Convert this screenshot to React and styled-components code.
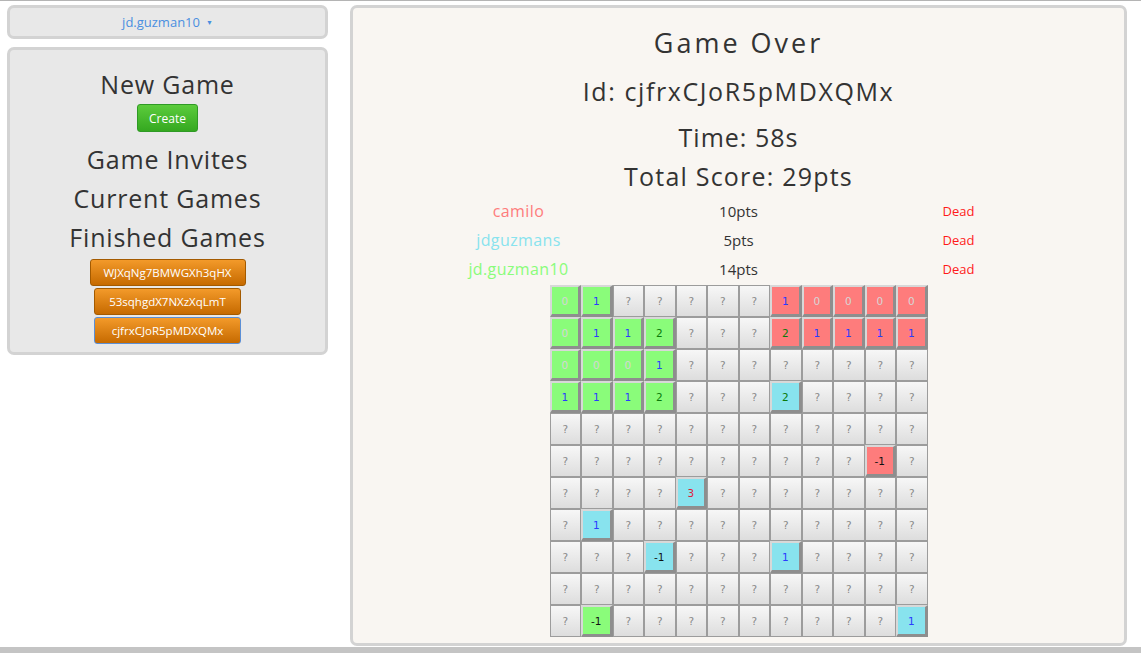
import styled, { createGlobalStyle } from 'styled-components';

const GlobalStyle = createGlobalStyle`
  html, body {
    margin: 0;
    padding: 0;
    background: #ffffff;
    font-family: "Open Sans", Lato, sans-serif;
  }
`;

const G = 'g';
const R = 'r';
const C = 'c';

// each cell: [owner, value] or null for hidden
const board = [
  [[G, 0], [G, 1], null, null, null, null, null, [R, 1], [R, 0], [R, 0], [R, 0], [R, 0]],
  [[G, 0], [G, 1], [G, 1], [G, 2], null, null, null, [R, 2], [R, 1], [R, 1], [R, 1], [R, 1]],
  [[G, 0], [G, 0], [G, 0], [G, 1], null, null, null, null, null, null, null, null],
  [[G, 1], [G, 1], [G, 1], [G, 2], null, null, null, [C, 2], null, null, null, null],
  [null, null, null, null, null, null, null, null, null, null, null, null],
  [null, null, null, null, null, null, null, null, null, null, [R, -1], null],
  [null, null, null, null, [C, 3], null, null, null, null, null, null, null],
  [null, [C, 1], null, null, null, null, null, null, null, null, null, null],
  [null, null, null, [C, -1], null, null, null, [C, 1], null, null, null, null],
  [null, null, null, null, null, null, null, null, null, null, null, null],
  [null, [G, -1], null, null, null, null, null, null, null, null, null, [C, 1]],
];

const ownerColor = { g: '#8afc7a', r: '#fe7c7c', c: '#88e3ee' };
const valueColor = { '-1': '#111111', 0: '#d6d6d6', 1: '#2a3cff', 2: '#0b7a0b', 3: '#e0203a' };

const players = [
  { name: 'camilo', pts: '10pts', color: '#fe7c7c' },
  { name: 'jdguzmans', pts: '5pts', color: '#88e3ee' },
  { name: 'jd.guzman10', pts: '14pts', color: '#8afc7a' },
];

const Page = styled.div`
  height: 100vh;
  display: flex;
  flex-direction: column;
  border-top: 1px solid #b4b4b4;
  box-sizing: border-box;
`;

const Content = styled.div`
  flex: 1;
  display: flex;
  gap: 22px;
  padding: 4px 14px 0 7px;
  min-height: 0;
`;

const BottomBar = styled.div`
  height: 6px;
  margin-top: 1px;
  background: #c4c4c4;
`;

const Side = styled.div`
  width: 321px;
  display: flex;
  flex-direction: column;
  gap: 8px;
`;

const Box = styled.div`
  background: #e8e8e8;
  border: 3px solid #d3d3d3;
  border-radius: 7px;
  box-sizing: border-box;
  display: flex;
  flex-direction: column;
  align-items: center;
`;

const UserBox = styled(Box)`
  height: 34px;
  justify-content: center;
`;

const UserName = styled.span`
  color: #4a8fe0;
  font-size: 13px;
  display: flex;
  align-items: center;
  gap: 6px;
`;

const Caret = styled.span`
  font-size: 7px;
  color: #4a8fe0;
`;

const MenuBox = styled(Box)`
  padding: 15px 0 8px;
`;

const MenuTitle = styled.div`
  font-size: 25px;
  line-height: 39px;
  letter-spacing: 0.8px;
  color: #333333;
`;

const CreateButton = styled.button`
  font-family: inherit;
  font-size: 12px;
  color: #ffffff;
  width: 61px;
  height: 28px;
  border: 1px solid #2f9a25;
  border-radius: 3px;
  background: linear-gradient(#5ccc3c, #35a820);
  margin: 0 0 8px;
  padding: 0;
`;

const GameList = styled.div`
  display: flex;
  flex-direction: column;
  align-items: center;
  gap: 2px;
  margin-top: 2px;
`;

const GameButton = styled.button`
  font-family: inherit;
  font-size: 11.5px;
  color: #ffffff;
  height: 27px;
  width: ${(p) => p.$w}px;
  border: 1px solid ${(p) => (p.$active ? '#5b8fd6' : '#a35a00')};
  border-radius: 3px;
  background: linear-gradient(#f39a2a, #c66a00);
  padding: 0;
`;

const Main = styled.div`
  width: 777px;
  height: 641px;
  background: #f9f6f2;
  border: 3px solid #d3d3d3;
  border-radius: 7px;
  box-sizing: border-box;
  display: flex;
  flex-direction: column;
  align-items: center;
  padding-top: 17px;
  color: #333333;
`;

const Heading = styled.div`
  font-size: ${(p) => p.$size}px;
  line-height: ${(p) => p.$lh}px;
  margin-top: ${(p) => p.$mt || 0}px;
  letter-spacing: ${(p) => p.$ls || 0}px;
`;

const Players = styled.div`
  display: grid;
  grid-template-columns: repeat(3, 220px);
  grid-auto-rows: 29px;
  margin-top: 2px;
  align-items: center;
  justify-items: center;
`;

const PlayerName = styled.div`
  font-size: 16px;
  letter-spacing: 0.4px;
  color: ${(p) => p.$color};
`;

const Points = styled.div`
  font-size: 15px;
  color: #333333;
`;

const Status = styled.div`
  font-size: 13px;
  color: #ff1a1a;
`;

const Board = styled.div`
  display: grid;
  grid-template-columns: repeat(12, 31.5px);
  grid-auto-rows: 32px;
  margin-top: 2px;
`;

const Cell = styled.div`
  box-sizing: border-box;
  display: flex;
  align-items: center;
  justify-content: center;
  font-family: "DejaVu Sans", Verdana, sans-serif;
  font-size: 10.5px;
  border: 1px solid #9c9c9c;
  background: linear-gradient(#f7f7f7, #dddddd);
  color: #8a8a8a;
`;

const OpenCell = styled(Cell)`
  border-width: 2px 3px 3px 2px;
  border-color: #d8d8d8 #8e8e8e #8e8e8e #d8d8d8;
  background: ${(p) => p.$bg};
  color: ${(p) => p.$color};
`;

export default function App() {
  return (
    <>
      <GlobalStyle />
      <Page>
        <Content>
          <Side>
            <UserBox>
              <UserName>
                jd.guzman10 <Caret>▼</Caret>
              </UserName>
            </UserBox>
            <MenuBox>
              <MenuTitle>New Game</MenuTitle>
              <CreateButton>Create</CreateButton>
              <MenuTitle>Game Invites</MenuTitle>
              <MenuTitle>Current Games</MenuTitle>
              <MenuTitle>Finished Games</MenuTitle>
              <GameList>
                <GameButton $w={156}>WJXqNg7BMWGXh3qHX</GameButton>
                <GameButton $w={147}>53sqhgdX7NXzXqLmT</GameButton>
                <GameButton $w={147} $active>cjfrxCJoR5pMDXQMx</GameButton>
              </GameList>
            </MenuBox>
          </Side>
          <Main>
            <Heading $size={27} $lh={36} $ls={3}>Game Over</Heading>
            <Heading $size={25} $lh={40} $mt={10} $ls={1.6}>Id: cjfrxCJoR5pMDXQMx</Heading>
            <Heading $size={25} $lh={36} $mt={8} $ls={1}>Time: 58s</Heading>
            <Heading $size={25} $lh={36} $mt={3} $ls={1.2}>Total Score: 29pts</Heading>
            <Players>
              {players.map((p) => [
                <PlayerName key={p.name} $color={p.color}>{p.name}</PlayerName>,
                <Points key={p.name + 'p'}>{p.pts}</Points>,
                <Status key={p.name + 's'}>Dead</Status>,
              ])}
            </Players>
            <Board>
              {board.map((row, y) =>
                row.map((cell, x) =>
                  cell ? (
                    <OpenCell
                      key={y + '-' + x}
                      $bg={ownerColor[cell[0]]}
                      $color={valueColor[cell[1]]}
                    >
                      {cell[1]}
                    </OpenCell>
                  ) : (
                    <Cell key={y + '-' + x}>?</Cell>
                  )
                )
              )}
            </Board>
          </Main>
        </Content>
        <BottomBar />
      </Page>
    </>
  );
}
